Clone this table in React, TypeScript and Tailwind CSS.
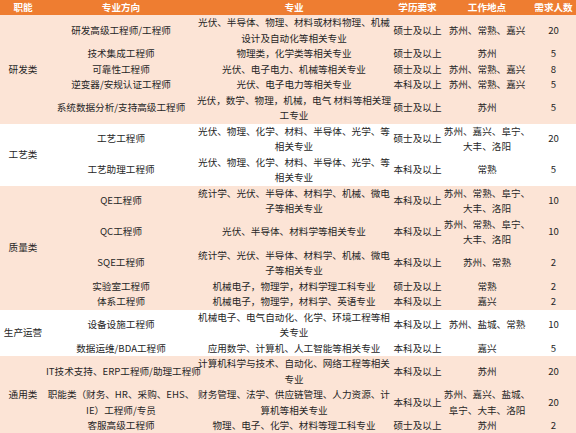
import { Fragment } from "react";

type Row = {
  title: string[];
  major: string[];
  edu: string;
  place: string[];
  count: string;
};

type Group = { name: string; band: boolean; rows: Row[] };

const groups: Group[] = [
  {
    name: "研发类",
    band: true,
    rows: [
      {
        title: ["研发高级工程师/工程师"],
        major: ["光伏、半导体、物理、材料或材料物理、机械", "设计及自动化等相关专业"],
        edu: "硕士及以上",
        place: ["苏州、常熟、嘉兴"],
        count: "20",
      },
      { title: ["技术集成工程师"], major: ["物理类，化学类等相关专业"], edu: "硕士及以上", place: ["苏州"], count: "5" },
      { title: ["可靠性工程师"], major: ["光伏、电子电力、机械等相关专业"], edu: "硕士及以上", place: ["苏州、常熟、嘉兴"], count: "8" },
      { title: ["逆变器/安规认证工程师"], major: ["光伏、电子电力等相关专业"], edu: "本科及以上", place: ["苏州、常熟、嘉兴"], count: "5" },
      {
        title: ["系统数据分析/支持高级工程师"],
        major: ["光伏，数学、物理，机械，电气 材料等相关理", "工专业"],
        edu: "硕士及以上",
        place: ["苏州"],
        count: "5",
      },
    ],
  },
  {
    name: "工艺类",
    band: false,
    rows: [
      {
        title: ["工艺工程师"],
        major: ["光伏、物理、化学、材料、半导体、光学、等", "相关专业"],
        edu: "硕士及以上",
        place: ["苏州、嘉兴、阜宁、", "大丰、洛阳"],
        count: "20",
      },
      {
        title: ["工艺助理工程师"],
        major: ["光伏、物理、化学、材料、半导体、光学、等", "相关专业"],
        edu: "本科及以上",
        place: ["常熟"],
        count: "5",
      },
    ],
  },
  {
    name: "质量类",
    band: true,
    rows: [
      {
        title: ["QE工程师"],
        major: ["统计学、光伏、半导体、材料学、机械、微电", "子等相关专业"],
        edu: "本科及以上",
        place: ["苏州、常熟、阜宁、", "大丰、洛阳"],
        count: "10",
      },
      {
        title: ["QC工程师"],
        major: ["光伏、半导体、材料学等相关专业"],
        edu: "本科及以上",
        place: ["苏州、常熟、阜宁、", "大丰、洛阳"],
        count: "10",
      },
      {
        title: ["SQE工程师"],
        major: ["统计学、光伏、半导体、材料学、机械、微电", "子等相关专业"],
        edu: "本科及以上",
        place: ["苏州、常熟"],
        count: "2",
      },
      { title: ["实验室工程师"], major: ["机械电子，物理学，材料学理工科专业"], edu: "硕士及以上", place: ["常熟"], count: "2" },
      { title: ["体系工程师"], major: ["机械电子，物理学，材料学、英语专业"], edu: "本科及以上", place: ["嘉兴"], count: "2" },
    ],
  },
  {
    name: "生产运营",
    band: false,
    rows: [
      {
        title: ["设备设施工程师"],
        major: ["机械电子、电气自动化、化学、环境工程等相", "关专业"],
        edu: "本科及以上",
        place: ["苏州、盐城、常熟"],
        count: "10",
      },
      { title: ["数据运维/BDA工程师"], major: ["应用数学、计算机、人工智能等相关专业"], edu: "本科及以上", place: ["嘉兴"], count: "5" },
    ],
  },
  {
    name: "通用类",
    band: true,
    rows: [
      {
        title: ["IT技术支持、ERP工程师/助理工程师"],
        major: ["计算机科学与技术、自动化、网络工程等相关", "专业"],
        edu: "本科及以上",
        place: ["苏州"],
        count: "20",
      },
      {
        title: ["职能类（财务、HR、采购、EHS、", "IE）工程师/专员"],
        major: ["财务管理、法学、供应链管理、人力资源、计", "算机等相关专业"],
        edu: "本科及以上",
        place: ["苏州、嘉兴、盐城、", "阜宁、大丰、洛阳"],
        count: "20",
      },
      { title: ["客服高级工程师"], major: ["物理、电子、化学、材料等理工科专业"], edu: "硕士及以上", place: ["苏州"], count: "2" },
    ],
  },
];

const Lines = ({ items }: { items: string[] }) => (
  <>
    {items.map((t, i) => (
      <Fragment key={i}>
        {i > 0 && <br />}
        {t}
      </Fragment>
    ))}
  </>
);

export default function App() {
  return (
    <div
      className="w-[576px] h-[433px] overflow-hidden bg-white text-[#262626] text-[9.6px] leading-[15.5px]"
      style={{ fontFamily: '"Noto Sans CJK SC", "Noto Sans", sans-serif' }}
    >
      <table className="w-[576px] table-fixed border-collapse">
        <colgroup>
          <col className="w-[46px]" />
          <col className="w-[150px]" />
          <col className="w-[196px]" />
          <col className="w-[51px]" />
          <col className="w-[88px]" />
          <col className="w-[45px]" />
        </colgroup>
        <thead>
          <tr className="h-[15px] bg-[#ee7d31] text-white font-bold leading-[15px]">
            <th className="p-0 text-center font-bold">职能</th>
            <th className="p-0 text-center font-bold">专业方向</th>
            <th className="p-0 text-center font-bold">专业</th>
            <th className="p-0 text-center font-bold">学历要求</th>
            <th className="p-0 text-center font-bold">工作地点</th>
            <th className="p-0 text-center font-bold">需求人数</th>
          </tr>
        </thead>
        <tbody>
          {groups.map((g) =>
            g.rows.map((r, i) => (
              <tr key={g.name + i} className={g.band ? "bg-[#fce4d6]" : "bg-white"}>
                {i === 0 && (
                  <td rowSpan={g.rows.length} className="p-0 text-center align-middle whitespace-nowrap">
                    {g.name}
                  </td>
                )}
                <td className="p-0 text-center align-middle whitespace-nowrap">
                  <Lines items={r.title} />
                </td>
                <td className="p-0 text-center align-middle whitespace-nowrap">
                  <Lines items={r.major} />
                </td>
                <td className="p-0 text-center align-middle whitespace-nowrap">{r.edu}</td>
                <td className="p-0 text-center align-middle whitespace-nowrap">
                  <Lines items={r.place} />
                </td>
                <td className="p-0 text-center align-middle whitespace-nowrap">{r.count}</td>
              </tr>
            ))
          )}
        </tbody>
      </table>
    </div>
  );
}
